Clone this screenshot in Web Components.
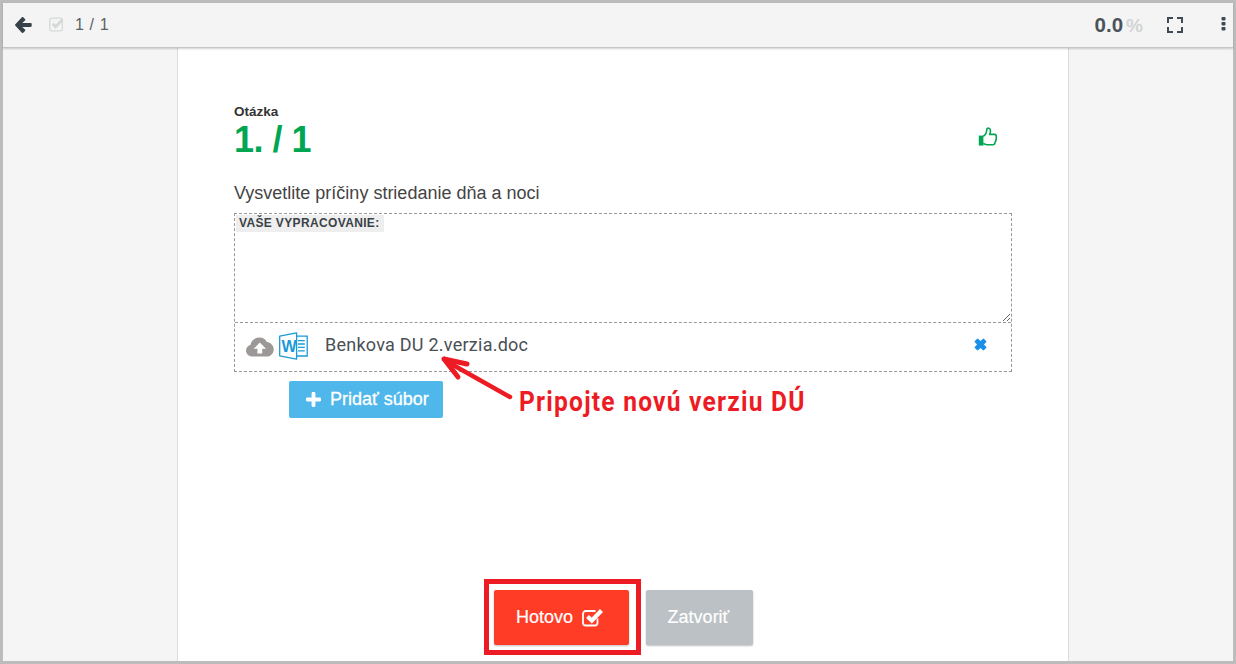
<!DOCTYPE html>
<html lang="sk">
  <head>
    <meta charset="UTF-8" />
    <title>Otázka</title>
    <style>
      html, body { margin: 0; height: 100%; overflow: hidden; background: #fff; }
      body { font-family: "Liberation Sans", Arial, sans-serif; color: #444; }
    </style>
  </head>
  <body>
    <quiz-shell>
      <quiz-toolbar slot="bar" count="1 / 1" score="0.0"></quiz-toolbar>
      <question-panel order="1. / 1" text="Vysvetlite príčiny striedanie dňa a noci">
        <answer-box label="VAŠE VYPRACOVANIE:">
          <file-row name="Benkova DU 2.verzia.doc"></file-row>
        </answer-box>
        <add-file-button>Pridať súbor</add-file-button>
        <callout-note>Pripojte novú verziu DÚ</callout-note>
      </question-panel>
      <quiz-actions slot="actions"></quiz-actions>
    </quiz-shell>

    <script>
      // shell: gray frame, top bar and the white sheet
      class QuizShell extends HTMLElement {
        constructor() {
          super();
          this.attachShadow({ mode: "open" });
          this.shadowRoot.innerHTML = `
      <style>
        :host {
          display: flex;
          flex-direction: column;
          box-sizing: border-box;
          height: 664px;
          border: 3px solid #bcbcbc;
          background: #f5f5f5;
        }
        .sheet {
          flex: 1;
          min-height: 0;
          box-sizing: border-box;
          width: 892px;
          margin-left: 174px;
          background: #fff;
          border-left: 1px solid #dcdcdc;
          border-right: 1px solid #dcdcdc;
          display: flex;
          flex-direction: column;
          justify-content: space-between;
        }
      </style>
      <slot name="bar"></slot>
      <div class="sheet">
        <slot></slot>
        <slot name="actions"></slot>
      </div>
    `;
        }
      }

      class QuizToolbar extends HTMLElement {
        constructor() {
          super();
          this.attachShadow({ mode: "open" });
        }
        connectedCallback() {
          this.shadowRoot.innerHTML = `
      <style>
        :host {
          display: flex;
          align-items: center;
          flex: none;
          height: 44px;
          background: #f4f4f4;
          border-bottom: 1px solid #c4c4c4;
          box-shadow: 0 1px 2px rgba(0, 0, 0, .18);
          position: relative;
          z-index: 1;
          padding: 0 6px 0 12px;
          color: #3f4a54;
        }
        svg { display: block; }
        .back { margin-right: 17px; margin-top: -1px; }
        .check { margin-right: 11px; margin-top: -2px; }
        .count { font-size: 16px; color: #5a6268; letter-spacing: .6px; margin-top: -1px; }
        .score { margin-left: auto; font-size: 20.5px; font-weight: bold; color: #4a535b; }
        .pct { font-size: 19px; font-weight: bold; color: #d2d4d5; margin: 2px 24px 0 3px; }
        .full { margin-right: 38px; margin-top: -1px; }
        .dots { margin-right: 1px; margin-top: -4px; }
      </style>
      <svg class="back" width="17" height="16" viewBox="0 0 17 16" fill="#36414a">
        <path d="M8.2.3 10 2.1a.9.9 0 0 1 0 1.3L7.2 6.1h8.3c.8 0 1.2.5 1.2 1.2v1.4c0 .7-.4 1.2-1.2 1.2H7.2l2.8 2.7a.9.9 0 0 1 0 1.3l-1.8 1.8a.9.9 0 0 1-1.3 0L.4 8.7a1 1 0 0 1 0-1.4L6.9.3a.9.9 0 0 1 1.3 0Z"/>
      </svg>
      <svg class="check" width="15" height="15" viewBox="0 0 15 15" fill="none">
        <rect x=".7" y="1.2" width="12.6" height="12.6" rx="2" stroke="#d6d8d8" stroke-width="1.3"/>
        <path d="M3.6 6.8 6.6 9.8 13.4 2.8" stroke="#d6d8d8" stroke-width="2.8"/>
      </svg>
      <span class="count">${this.getAttribute("count")}</span>
      <span class="score">${this.getAttribute("score")}</span>
      <span class="pct">%</span>
      <svg class="full" width="16" height="16" viewBox="0 0 16 16" fill="#3f4a54">
        <path d="M0 0h6v2H2v4H0ZM10 0h6v6h-2V2h-4ZM0 10h2v4h4v2H0ZM14 10h2v6h-6v-2h4Z"/>
      </svg>
      <svg class="dots" width="5" height="15" viewBox="0 0 5 15" fill="#3f4a54">
        <rect x=".5" y="1" width="4" height="3.4" rx=".8"/>
        <rect x=".5" y="6" width="4" height="3.4" rx=".8"/>
        <rect x=".5" y="11" width="4" height="3.4" rx=".8"/>
      </svg>
    `;
        }
      }

      class QuestionPanel extends HTMLElement {
        constructor() {
          super();
          this.attachShadow({ mode: "open" });
        }
        connectedCallback() {
          this.shadowRoot.innerHTML = `
      <style>
        :host {
          display: block;
          position: relative;
          padding: 56px 56px 0 56px;
        }
        .small { font-size: 13.5px; font-weight: bold; line-height: 15px; color: #333; }
        .head { display: flex; justify-content: space-between; align-items: center; padding-right: 15px; }
        .order { font-size: 36px; font-weight: bold; line-height: 42px; letter-spacing: -.5px; color: #00a651; }
        .thumb { display: block; margin-top: -6px; }
        .text { margin: 20px 0 8px; font-size: 18px; line-height: 24px; color: #444; }
      </style>
      <div class="small">Otázka</div>
      <div class="head">
        <div class="order">${this.getAttribute("order")}</div>
        <svg class="thumb" width="19" height="20" viewBox="0 0 19 20" fill="none">
          <rect x=".8" y="8.6" width="4.6" height="10" fill="#00a651"/>
          <path d="M5.2 9.2C7.4 8 8.7 5.6 8.8 2.4 8.9 1.2 10.2.8 11.2 1.4c1.4.9 1.5 3.4.5 6h4.8c1.7 0 2.3 1.5 1.6 2.6.6 1 .4 2-.3 2.7.3 1 0 1.9-.8 2.4.1 1.4-.6 2.6-2.2 2.6H9.2c-1.6 0-2.6-.7-4-1.1" stroke="#00a651" stroke-width="1.6" stroke-linejoin="round"/>
        </svg>
      </div>
      <div class="text">${this.getAttribute("text")}</div>
      <slot></slot>
    `;
        }
      }

      class AnswerBox extends HTMLElement {
        constructor() {
          super();
          this.attachShadow({ mode: "open" });
        }
        connectedCallback() {
          this.shadowRoot.innerHTML = `
      <style>
        :host {
          display: block;
          position: relative;
          width: 778px;
          box-sizing: border-box;
          border: 1px dashed #999;
        }
        textarea {
          display: block;
          box-sizing: border-box;
          width: 100%;
          height: 109px;
          border: 0;
          outline: 0;
          padding: 0;
          margin: 0;
          background: #fff;
          border-bottom: 1px dashed #999;
        }
        .label {
          position: absolute;
          left: 1px;
          top: 1px;
          padding: 0 4px 0 3px;
          font-size: 12px;
          font-weight: bold;
          line-height: 17px;
          letter-spacing: .35px;
          color: #3a4248;
          background: #eee;
        }
      </style>
      <textarea aria-label="${this.getAttribute("label")}"></textarea>
      <span class="label">${this.getAttribute("label")}</span>
      <slot></slot>
    `;
        }
      }

      class FileRow extends HTMLElement {
        constructor() {
          super();
          this.attachShadow({ mode: "open" });
        }
        connectedCallback() {
          this.shadowRoot.innerHTML = `
      <style>
        :host {
          display: flex;
          align-items: center;
          height: 48px;
          padding: 0 24px 2px 11px;
          box-sizing: border-box;
          color: #444;
        }
        svg { display: block; flex: none; }
        .cloud { margin-right: 5px; margin-top: 2px; }
        .name { margin-left: 17px; margin-top: -3px; font: 18px/24px Roboto, "Liberation Sans", sans-serif; color: #4a4f55; letter-spacing: .25px; }
        .del { margin-left: auto; margin-top: -3px; }
      </style>
      <svg class="cloud" width="28" height="20" viewBox="0 0 28 20">
        <path fill="#9b9897" d="M6.5 19.6C2.8 19.6 0 17 0 13.6c0-2.8 1.8-5 4.4-5.7C5.2 3.8 8.6 1 12.8.6c3.6-.3 6.6 1.4 8 4.4 3.9.4 6.9 3.600 6.9 7.400 0 4-3.200 7.200-7.400 7.200Z"/>
        <path fill="#fff" d="M13.8 5.600 20 11.800h-3.800v4.800h-4.800v-4.800H7.600Z"/>
      </svg>
      <svg class="word" width="29" height="28" viewBox="0 0 29 28" fill="none" stroke="#1a9ad9" stroke-width="1.3">
        <path d="M.7 4.200 17.600.8v26.400L.7 23.800Z" stroke-linejoin="round"/>
        <path d="M17.600 4.200h10.600v19.800H17.600M19 8.600h6.800M19 12h6.800M19 15.400h6.800M19 18.800h6.800" />
        <text x="2.400" y="19.500" font-family="Liberation Sans" font-size="16" font-weight="bold" fill="#1a9ad9" stroke="none">W</text>
      </svg>
      <span class="name">${this.getAttribute("name")}</span>
      <svg class="del" width="13" height="13" viewBox="0 0 13 13">
        <path fill="#1a8fe8" d="M.9 2.900 2.900.9a1 1 0 0 1 1.400 0L6.500 3.100 8.700.9a1 1 0 0 1 1.400 0l2 2a1 1 0 0 1 0 1.400L9.900 6.500l2.200 2.200a1 1 0 0 1 0 1.400l-2 2a1 1 0 0 1-1.400 0L6.500 9.900l-2.200 2.200a1 1 0 0 1-1.400 0l-2-2a1 1 0 0 1 0-1.400L3.100 6.500.9 4.300a1 1 0 0 1 0-1.400Z"/>
      </svg>
    `;
        }
      }

      class AddFileButton extends HTMLElement {
        constructor() {
          super();
          this.attachShadow({ mode: "open" });
          this.shadowRoot.innerHTML = `
      <style>
        :host {
          display: flex;
          align-items: center;
          gap: 9px;
          box-sizing: border-box;
          width: 154px;
          height: 37px;
          margin: 9px 0 0 55px;
          padding-left: 17px;
          background: #4fb7e9;
          border-radius: 2px;
          color: #fff;
          font-size: 18px;
        }
        svg { display: block; flex: none; }
        span { -webkit-text-stroke: .3px #fff; }
      </style>
      <svg width="15" height="15" viewBox="0 0 15 15" fill="#fff">
        <path d="M5.600 1.200C5.600.5 6.100 0 6.800 0h1.400c.7 0 1.200.5 1.200 1.200v4.400h4.400c.7 0 1.200.5 1.200 1.200v1.400c0 .7-.5 1.200-1.200 1.200H9.400v4.400c0 .7-.5 1.200-1.200 1.200H6.800c-.7 0-1.200-.5-1.200-1.200V9.400H1.200C.5 9.400 0 8.900 0 8.200V6.800c0-.7.5-1.200 1.200-1.200h4.400Z"/>
      </svg>
      <span><slot></slot></span>
    `;
        }
      }

      // red note with the arrow, lies over the sheet
      class CalloutNote extends HTMLElement {
        constructor() {
          super();
          this.attachShadow({ mode: "open" });
          this.shadowRoot.innerHTML = `
      <style>
        :host {
          position: absolute;
          left: 262px;
          top: 305px;
          width: 400px;
          height: 70px;
          display: block;
        }
        svg { position: absolute; left: 0; top: 0; }
        .note {
          position: absolute;
          left: 79px;
          top: 31px;
          white-space: nowrap;
          font: bold 27px/36px Roboto, sans-serif;
          letter-spacing: 1.35px;
          color: #ed1c24;
          transform: scaleX(.91);
          transform-origin: left center;
        }
      </style>
      <svg width="80" height="60" viewBox="0 0 80 60" fill="none" stroke="#ed1c24" stroke-width="4.500" stroke-linecap="round" stroke-linejoin="round">
        <path d="M70 44 6 8"/>
        <path d="M4 6 27 11M4 6 18 24" stroke-width="5"/>
      </svg>
      <span class="note"><slot></slot></span>
    `;
        }
      }

      class QuizActions extends HTMLElement {
        constructor() {
          super();
          this.attachShadow({ mode: "open" });
          this.shadowRoot.innerHTML = `
      <style>
        :host {
          display: flex;
          justify-content: flex-start;
          gap: 17px;
          padding: 0 0 16px 316px;
          position: relative;
        }
        button {
          display: flex;
          align-items: center;
          justify-content: center;
          height: 55px;
          border: 0;
          border-radius: 2px;
          padding: 0;
          color: #fff;
          font: 18px "Liberation Sans", sans-serif;
          -webkit-text-stroke: .2px #fff;
          box-shadow: 0 1px 2px rgba(0, 0, 0, .25);
        }
        .done { width: 135px; gap: 9px; padding-right: 3px; background: #ff3c26; }
        .close { width: 107px; padding-right: 2px; background: #bbc1c4; }
        svg { display: block; }
        .mark {
          position: absolute;
          left: 306px;
          top: -11px;
          width: 157px;
          height: 76px;
          box-sizing: border-box;
          border: 5px solid #ed1c24;
        }
      </style>
      <button class="done">Hotovo
        <svg width="22" height="19" viewBox="0 0 22 19" fill="none">
          <path d="M15.500 10.500v4.200a2.800 2.800 0 0 1-2.800 2.800H3.800A2.800 2.800 0 0 1 1 14.700V5.800A2.800 2.800 0 0 1 3.800 3h9.700" stroke="#fff" stroke-width="1.800"/>
          <path d="M5.500 8.500 9.800 12.500 19.500 2.500" stroke="#fff" stroke-width="4.200"/>
        </svg>
      </button>
      <button class="close">Zatvoriť</button>
      <div class="mark"></div>
    `;
        }
      }

      customElements.define("quiz-shell", QuizShell);
      customElements.define("quiz-toolbar", QuizToolbar);
      customElements.define("question-panel", QuestionPanel);
      customElements.define("answer-box", AnswerBox);
      customElements.define("file-row", FileRow);
      customElements.define("add-file-button", AddFileButton);
      customElements.define("callout-note", CalloutNote);
      customElements.define("quiz-actions", QuizActions);
    </script>
  </body>
</html>
